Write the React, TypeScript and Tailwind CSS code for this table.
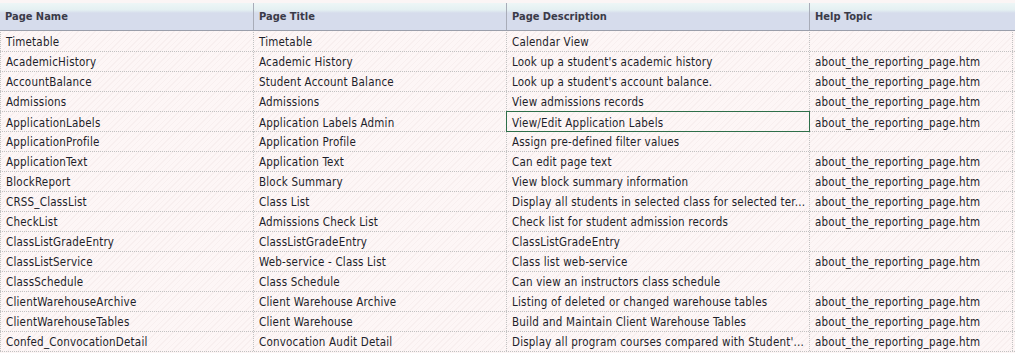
import React from "react";

const rows: [string, string, string, string][] = [
  ["Timetable", "Timetable", "Calendar View", ""],
  ["AcademicHistory", "Academic History", "Look up a student's academic history", "about_the_reporting_page.htm"],
  ["AccountBalance", "Student Account Balance", "Look up a student's account balance.", "about_the_reporting_page.htm"],
  ["Admissions", "Admissions", "View admissions records", "about_the_reporting_page.htm"],
  ["ApplicationLabels", "Application Labels Admin", "View/Edit Application Labels", "about_the_reporting_page.htm"],
  ["ApplicationProfile", "Application Profile", "Assign pre-defined filter values", ""],
  ["ApplicationText", "Application Text", "Can edit page text", "about_the_reporting_page.htm"],
  ["BlockReport", "Block Summary", "View block summary information", "about_the_reporting_page.htm"],
  ["CRSS_ClassList", "Class List", "Display all students in selected class for selected ter...", "about_the_reporting_page.htm"],
  ["CheckList", "Admissions Check List", "Check list for student admission records", "about_the_reporting_page.htm"],
  ["ClassListGradeEntry", "ClassListGradeEntry", "ClassListGradeEntry", ""],
  ["ClassListService", "Web-service - Class List", "Class list web-service", "about_the_reporting_page.htm"],
  ["ClassSchedule", "Class Schedule", "Can view an instructors class schedule", ""],
  ["ClientWarehouseArchive", "Client Warehouse Archive", "Listing of deleted or changed warehouse tables", "about_the_reporting_page.htm"],
  ["ClientWarehouseTables", "Client Warehouse", "Build and Maintain Client Warehouse Tables", "about_the_reporting_page.htm"],
  ["Confed_ConvocationDetail", "Convocation Audit Detail", "Display all program courses compared with Student'...", "about_the_reporting_page.htm"],
];

const cols = "grid grid-cols-[253px_253px_303px_204px]";
const cell =
  "pl-[5px] pt-[3px] flex items-center whitespace-nowrap overflow-hidden border-l border-dotted border-[#c2c2c2]";

export default function App() {
  return (
    <div className="w-[1015px] h-[353px] overflow-hidden bg-[#fdf6f6] text-[#1e1e2a] font-['DejaVu_Sans_Condensed','DejaVu_Sans',sans-serif]">
      <div className="h-[31px] pt-[3px] bg-[#fbf5f5]">
        <div className="grid grid-cols-[253px_253px_303px_206px] h-[28px] border-b border-[#9a9eaa] bg-[linear-gradient(to_bottom,#eef6f6_0px,#e4f0f2_7px,#d6dcec_10px,#d6dcec_100%)] font-bold text-[11px] text-[#3a3a48]">
          <div className="pl-[5px] flex items-center pt-[2px]">Page Name</div>
          <div className="pl-[5px] flex items-center pt-[2px] border-l border-[#a8acb8]">Page Title</div>
          <div className="pl-[5px] flex items-center pt-[2px] border-l border-[#a8acb8]">Page Description</div>
          <div className="pl-[5px] flex items-center pt-[2px] border-l border-[#a8acb8]">Help Topic</div>
        </div>
      </div>
      <div className="pt-[1px] text-[11.5px] tracking-[0.2px] bg-[repeating-linear-gradient(135deg,#fdf6f6_0px,#fdf6f6_3px,#f8efef_3px,#f8efef_4px)]">
        {rows.map((r, i) => (
          <div key={i} className={`${cols} h-[20px] border-b border-dotted border-[#c2c2c2]`}>
            <div className={cell}>{r[0]}</div>
            <div className={cell}>{r[1]}</div>
            {i === 4 ? (
              <div className={`${cell} relative overflow-visible`}>
                <div className="absolute left-[-1px] top-[-1px] w-[304px] h-[21px] border border-[#2f6f4a]" />
                {r[2]}
              </div>
            ) : (
              <div className={cell}>{r[2]}</div>
            )}
            <div className={`${cell} border-r`}>{r[3]}</div>
          </div>
        ))}
      </div>
    </div>
  );
}
